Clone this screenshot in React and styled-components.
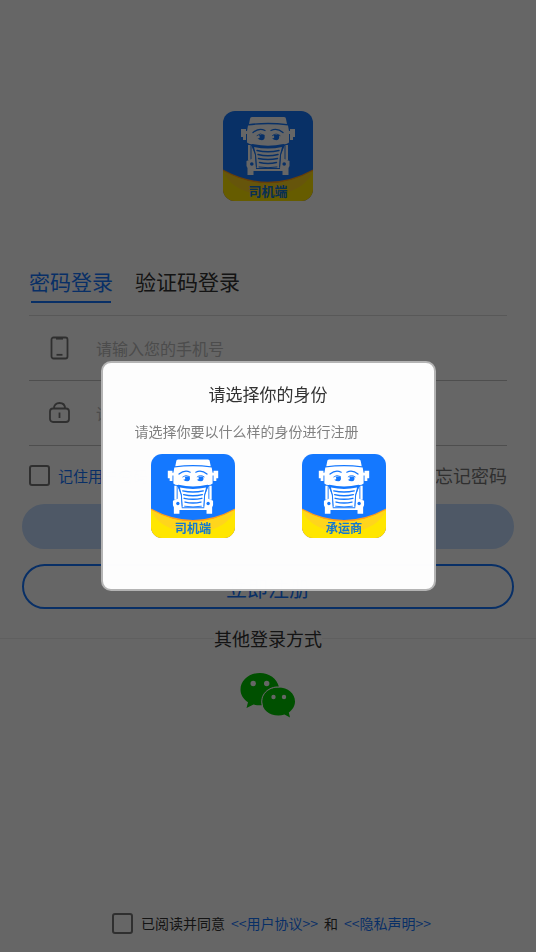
import React, { useState } from 'react';
import styled, { createGlobalStyle } from 'styled-components';

const GlobalStyle = createGlobalStyle`
  * {
    box-sizing: border-box;
  }
  body {
    margin: 0;
    background: #ffffff;
    color: #333333;
    font-family: 'Noto Sans CJK SC', sans-serif;
  }
  button,
  input {
    font-family: inherit;
  }
`;

const Page = styled.div`
  display: flex;
  flex-direction: column;
  min-height: 100vh;
`;

const LogoWrap = styled.div`
  display: flex;
  justify-content: center;
  padding-top: 111px;
`;

const LogoSvg = styled.svg`
  display: block;
  width: ${(props) => props.$size};
  height: ${(props) => props.$size};
  font-family: 'Noto Sans CJK SC', sans-serif;
`;

const Form = styled.form`
  display: flex;
  flex-direction: column;
  margin-top: 60px;
`;

const Tabs = styled.div`
  display: flex;
  gap: 22px;
  margin: 0 29px;
  height: 55px;
  border-bottom: 1px solid #dddddd;
`;

const Tab = styled.button`
  height: 42px;
  padding: 0;
  border: none;
  background: none;
  font-size: 21px;
  line-height: 40px;
  color: ${(props) => (props.$active ? '#1677ff' : '#333333')};

  &::after {
    content: '';
    display: block;
    height: 2px;
    margin: 0 2px;
    background: ${(props) => (props.$active ? '#1677ff' : 'transparent')};
  }
`;

const Field = styled.label`
  display: flex;
  align-items: center;
  gap: 26px;
  height: 65px;
  margin: 0 29px;
  padding-left: 20px;
  border-bottom: 1px solid #c4c4c4;

  svg {
    flex: none;
  }
`;

const FieldInput = styled.input`
  flex: 1;
  min-width: 0;
  padding: 0;
  border: none;
  outline: none;
  background: none;
  font-size: 16px;
  line-height: 24px;
  color: #333333;

  &::placeholder {
    color: #bdbdbd;
    opacity: 1;
  }
`;

const Options = styled.div`
  display: flex;
  align-items: center;
  justify-content: space-between;
  height: 58px;
  margin: 0 29px;
`;

const CheckLabel = styled.label`
  display: flex;
  align-items: center;
  gap: 8px;
  font-size: ${(props) => props.$size};
  color: ${(props) => props.$color};
`;

const Checkbox = styled.input`
  appearance: none;
  width: 21px;
  height: 21px;
  margin: 0;
  border: 2px solid #777777;
  border-radius: 3px;

  &:checked {
    background: #1677ff;
  }
`;

const ForgetLink = styled.a`
  font-size: 18px;
  color: #777777;
  text-decoration: none;
`;

const Buttons = styled.div`
  display: flex;
  flex-direction: column;
  gap: 15px;
  padding: 0 22px;
`;

const PillButton = styled.button`
  height: 45px;
  padding: 0;
  border: 2px solid ${(props) => (props.$primary ? '#c3dcff' : '#1677ff')};
  border-radius: 23px;
  background: ${(props) => (props.$primary ? '#c3dcff' : 'transparent')};
  color: ${(props) => (props.$primary ? '#ffffff' : '#1677ff')};
  font-size: 21px;
  line-height: 38px;
`;

const Divider = styled.div`
  display: flex;
  align-items: center;
  margin-top: 16px;
  font-size: 18px;
  line-height: 26px;

  &::before,
  &::after {
    content: '';
    flex: 1;
    height: 1px;
    background: #eeeeee;
  }
`;

const WechatButton = styled.button`
  align-self: center;
  margin-top: 21px;
  padding: 0;
  border: none;
  background: none;

  svg {
    display: block;
  }
`;

const Agreement = styled.div`
  display: flex;
  align-items: center;
  justify-content: center;
  gap: 6px;
  margin-top: auto;
  padding: 0 0 18px 7px;
  font-size: 14px;
  line-height: 22px;

  a {
    color: #1677ff;
    text-decoration: none;
  }
`;

const Overlay = styled.div`
  position: fixed;
  inset: 0;
  display: flex;
  align-items: center;
  justify-content: center;
  background: rgba(0, 0, 0, 0.6);
`;

const Modal = styled.div`
  width: 62.5%;
  padding: 17px 32px 51px;
  border: 2px solid #b4b4b4;
  border-radius: 10px;
  background: rgba(255, 255, 255, 0.99);
`;

const ModalTitle = styled.h2`
  margin: 0;
  font-size: 17px;
  font-weight: 400;
  line-height: 28px;
  text-align: center;
`;

const ModalText = styled.p`
  margin: 12px 0;
  font-size: 14px;
  line-height: 22px;
  color: #808080;
  white-space: nowrap;
`;

const Roles = styled.div`
  display: flex;
  justify-content: space-between;
  padding: 0 16px;
`;

const RoleButton = styled.button`
  padding: 0;
  border: none;
  background: none;
`;

// 卡车图标,label 为底部文字
function TruckLogo({ id, label, size }) {
  return (
    <LogoSvg viewBox="0 0 90 90" $size={size} role="img" aria-label={label}>
      <defs>
        <clipPath id={id}>
          <rect width="90" height="90" rx="12" />
        </clipPath>
      </defs>
      <g clipPath={`url(#${id})`}>
        <rect width="90" height="90" fill="#1478ff" />
        <path d="M0 58.5Q45 83 90 58.5V90H0Z" fill="#ff9d1c" />
        <path d="M0 60Q45 85 90 60V90H0Z" fill="#ffe600" />
        <path d="M0 60C12 92 78 92 90 60Q45 85 0 60Z" fill="#ffd51c" />
      </g>
      {/* 车身 */}
      <g fill="#fff">
        <path d="M29 6H61Q63 6 63 8L64 13Q45 10.500 26 13L27 8Q27 6 29 6Z" />
        <path d="M25 14.500Q45 11.800 65 14.500L66 20V31.500Q63 34 60.500 33Q45 36.500 29.500 33Q27 34 24 31.500V20Z" />
        <path d="M18 18H23V20H25V23H23V29H20V26H18ZM72 18H67V20H65V23H67V29H70V26H72Z" />
        {/* 侧柱和保险杠 */}
        <path d="M25 34H27.500V49H25ZM65 34H62.500V49H65Z" />
        <path d="M28.500 34.500L32 43L33 58H57L58 43L61.500 34.500V48L66.500 50V55L65.500 57V64H59.500V60H30.500V64H24.500V57L23.500 55V50L28.500 48Z" />
        {/* 格栅 */}
        <path d="M31 36Q45 39 59 36L57 44L56.500 57H33.500L33 44Z" />
      </g>
      <g fill="none" stroke="#1478ff" strokeLinecap="round">
        <path d="M30 21.500Q36 16.500 42 19.500M48 19.500Q54 16.500 60 21.500" strokeWidth="1.3" />
        <path d="M34 24.500Q37 21.500 41 24M49.500 24.500Q53 21.500 57 24.500" strokeWidth="0.9" />
        <path d="M29.500 35.500L32.500 44L33.500 56M60.500 35.500L57.500 44L56.500 56" strokeWidth="0.9" />
        <path
          d="M34 39.500Q45 42 56 39.500M35 43.500Q45 46 55 43.500M35.500 47.500Q45 49.500 54.500 47.500M36.500 51.500Q45 53.500 53.500 51.500"
          strokeWidth="1.5"
        />
        <path d="M36 56Q45 57.500 54 56" strokeWidth="1" />
      </g>
      <g fill="#1478ff">
        <path d="M36 24H41.500Q42.500 29 39 29.200Q36.500 29.200 34.500 27.500Q38 27.500 36 24Z" />
        <path d="M50.500 24H56Q57 29 53.500 29.200Q51 29.200 49 27.500Q52.500 27.500 50.500 24Z" />
        <circle cx="28.8" cy="53" r="1.8" />
        <circle cx="61.2" cy="53" r="1.8" />
      </g>
      <text x="45" y="85" fontSize="13" fontWeight="700" textAnchor="middle" fill="#1478cf">
        {label}
      </text>
    </LogoSvg>
  );
}

function PhoneIcon() {
  return (
    <svg width="21" height="24" viewBox="0 0 21 24" fill="none" stroke="#777777" strokeWidth="1.8">
      <rect x="2.5" y="1.5" width="16" height="21" rx="2" />
      <path d="M7 2.8H14" strokeWidth="1.6" />
      <path d="M7.5 18.8H13.5" />
    </svg>
  );
}

function LockIcon() {
  return (
    <svg width="21" height="24" viewBox="0 0 21 24" fill="none" stroke="#777777" strokeWidth="1.8">
      <rect x="1" y="7.5" width="19" height="13.5" rx="3" />
      <path d="M5 7.5C5 4 7 2 10.5 2S16 4 16 7.5" />
      <path d="M10.5 11.5V17" />
    </svg>
  );
}

function WechatIcon() {
  return (
    <svg width="56" height="46" viewBox="0 0 56 46">
      <path
        fill="#00c800"
        d="M20 1C9 1 0.500 8.500 0.500 17.500C0.500 22.500 3 27 8 30.200L6.500 36L13.500 32.500Q17 33.500 22 33.300C20 23 28 14.500 39 15C37 6.500 29 1 20 1Z"
      />
      <path
        fill="#00c800"
        d="M38.500 15.500C29 15.500 22 21.500 22 29.500S29 43.500 38.500 43.500Q41.500 43.500 44.500 42.500L50 45.500L48.800 40.500C52.500 38 55 34 55 29.500C55 21.500 48 15.500 38.500 15.500Z"
      />
      <g fill="#ffffff">
        <circle cx="13.200" cy="11.500" r="2.700" />
        <circle cx="26.700" cy="11.500" r="2.700" />
        <circle cx="33.500" cy="25" r="2.200" />
        <circle cx="44" cy="25" r="2.200" />
      </g>
      <path d="M22.500 34C19 23.500 28 14 39.500 15" fill="none" stroke="#ffffff" strokeWidth="1" />
    </svg>
  );
}

export default function App() {
  const [tab, setTab] = useState('password');
  const [open, setOpen] = useState(true);

  return (
    <>
      <GlobalStyle />
      <Page>
        <LogoWrap>
          <TruckLogo id="logo" label="司机端" size="90px" />
        </LogoWrap>

        <Form onSubmit={(e) => e.preventDefault()}>
          <Tabs>
            <Tab type="button" $active={tab === 'password'} onClick={() => setTab('password')}>
              密码登录
            </Tab>
            <Tab type="button" $active={tab === 'code'} onClick={() => setTab('code')}>
              验证码登录
            </Tab>
          </Tabs>
          <Field>
            <PhoneIcon />
            <FieldInput type="tel" placeholder="请输入您的手机号" aria-label="手机号" />
          </Field>
          <Field>
            <LockIcon />
            <FieldInput type="password" placeholder="请输入您的密码" aria-label="密码" />
          </Field>
          <Options>
            <CheckLabel $size="15px" $color="#1677ff">
              <Checkbox type="checkbox" />
              记住用户密码
            </CheckLabel>
            <ForgetLink href="#forget">忘记密码</ForgetLink>
          </Options>
          <Buttons>
            <PillButton type="submit" $primary>
              登录
            </PillButton>
            <PillButton type="button" onClick={() => setOpen(true)}>
              立即注册
            </PillButton>
          </Buttons>
        </Form>

        <Divider>其他登录方式</Divider>
        <WechatButton type="button" aria-label="微信登录">
          <WechatIcon />
        </WechatButton>

        <Agreement>
          <CheckLabel $size="14px" $color="#333333">
            <Checkbox type="checkbox" />
            已阅读并同意
          </CheckLabel>
          <a href="#user">&lt;&lt;用户协议&gt;&gt;</a>
          <span>和</span>
          <a href="#privacy">&lt;&lt;隐私声明&gt;&gt;</a>
        </Agreement>
      </Page>

      {/* 注册身份选择弹窗 */}
      {open && (
        <Overlay>
          <Modal role="dialog" aria-modal="true" aria-labelledby="role-title">
            <ModalTitle id="role-title">请选择你的身份</ModalTitle>
            <ModalText>请选择你要以什么样的身份进行注册</ModalText>
            <Roles>
              <RoleButton type="button" onClick={() => setOpen(false)}>
                <TruckLogo id="driver" label="司机端" size="84px" />
              </RoleButton>
              <RoleButton type="button" onClick={() => setOpen(false)}>
                <TruckLogo id="carrier" label="承运商" size="84px" />
              </RoleButton>
            </Roles>
          </Modal>
        </Overlay>
      )}
    </>
  );
}
